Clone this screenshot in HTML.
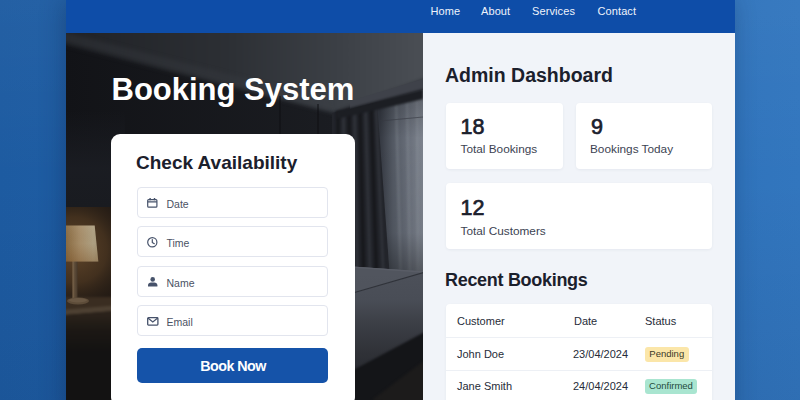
<!DOCTYPE html>
<html lang="en">
<head>
<meta charset="utf-8">
<title>Booking System</title>
<style>
*{box-sizing:border-box;margin:0;padding:0}
html,body{width:800px;height:400px;overflow:hidden}
body{font-family:"Liberation Sans",sans-serif;background:linear-gradient(180deg,rgba(255,255,255,.03) 0%,rgba(255,255,255,0) 45%,rgba(0,10,40,.07) 100%),linear-gradient(90deg,#1d5ba1 0%,#2262a9 40%,#2c6fb7 75%,#3276be 100%);position:relative;color:#1a1f2b}
.page{position:absolute;left:66px;top:0;width:669px;height:420px;overflow:hidden;background:#f1f4f9;box-shadow:-3px 0 22px rgba(8,30,70,.32)}
.in{position:absolute;left:-1px;top:0;width:670px;height:420px}
.nav{position:absolute;left:0;top:0;width:670px;height:33px;background:#0e4da8;z-index:2}
.nav a{position:absolute;top:3.5px;color:#eef3fb;font-size:11px;line-height:14px;text-decoration:none;letter-spacing:.1px}
.hero{position:absolute;left:0;top:32px;width:357.5px;height:388px;background:#191b20;overflow:hidden}
.hero svg{position:absolute;left:0;top:0}
.h1{position:absolute;left:46.5px;top:41px;color:#fff;font-weight:700;font-size:31px;line-height:34px;letter-spacing:0;white-space:nowrap}
.form{position:absolute;left:45.5px;top:134px;width:244px;height:272px;background:#fff;border-radius:9px}
.form h2{position:absolute;left:25.5px;top:17px;font-size:19px;line-height:24px;font-weight:700;color:#1b202c;white-space:nowrap}
.inp{position:absolute;left:26.5px;width:191px;height:31px;border:1px solid #e2e5ee;border-radius:4px;background:#fff}
.inp span{position:absolute;left:28.5px;top:8.5px;font-size:10.5px;line-height:14px;color:#4a5263}
.inp svg{position:absolute;left:9px;top:9px}
.btn{position:absolute;left:26px;top:213.5px;width:191px;height:35.5px;border-radius:5px;background:#1553a9;color:#fff;font-weight:700;font-size:14.3px;line-height:37.5px;letter-spacing:-.55px;text-indent:2px;text-align:center}
.side{position:absolute;left:358px;top:32px;width:312px;height:388px}
.side h2{position:absolute;left:22px;font-size:19.5px;line-height:24px;font-weight:700;color:#1b202c;white-space:nowrap}
.card{position:absolute;background:#fff;border-radius:4px;box-shadow:0 1px 3px rgba(30,50,90,.06)}
.card b{position:absolute;left:14.5px;top:12px;font-size:21.5px;line-height:24px;font-weight:400;-webkit-text-stroke:.7px #1b202c;color:#1b202c}
.card i{position:absolute;left:14.5px;top:39.5px;font-style:normal;font-size:11.8px;line-height:14px;color:#3c4352;white-space:nowrap}
.tbl{position:absolute;left:23px;top:272px;width:266px;height:130px;background:#fff;border-radius:4px;box-shadow:0 1px 3px rgba(30,50,90,.06)}
.tbl span{position:absolute;font-size:11px;line-height:14px;color:#262c38;white-space:nowrap}
.tbl hr{position:absolute;left:0;width:266px;height:1px;border:0;background:#edf0f5}
.bdg{position:absolute;left:199px;height:14.5px;border-radius:3px;font-size:9.5px;line-height:14.5px;text-align:center;color:#3b3a2a}
</style>
</head>
<body>
<div class="page"><div class="in">
  <div class="nav">
    <a style="left:365.5px">Home</a>
    <a style="left:416px">About</a>
    <a style="left:467px">Services</a>
    <a style="left:532.5px">Contact</a>
  </div>
  <div class="hero">
    <svg width="358" height="368" viewBox="65 32 358 368">
      <defs>
        <linearGradient id="gCeil" x1="65" y1="0" x2="423" y2="0" gradientUnits="userSpaceOnUse">
          <stop offset="0" stop-color="#202226"/><stop offset=".45" stop-color="#2c2f34"/><stop offset=".75" stop-color="#3b3f45"/><stop offset="1" stop-color="#4a4e54"/>
        </linearGradient>
        <linearGradient id="gWall" x1="65" y1="0" x2="350" y2="0" gradientUnits="userSpaceOnUse">
          <stop offset="0" stop-color="#121317"/><stop offset="1" stop-color="#1b1d22"/>
        </linearGradient>
        <linearGradient id="gSheer" x1="380" y1="0" x2="423" y2="0" gradientUnits="userSpaceOnUse">
          <stop offset="0" stop-color="#353942"/><stop offset=".3" stop-color="#535963"/><stop offset=".6" stop-color="#656b76"/><stop offset="1" stop-color="#7d838e"/>
        </linearGradient>
        <linearGradient id="gSheerV" x1="0" y1="100" x2="0" y2="290" gradientUnits="userSpaceOnUse">
          <stop offset="0" stop-color="#000" stop-opacity=".2"/><stop offset=".2" stop-color="#000" stop-opacity="0"/><stop offset=".7" stop-color="#000" stop-opacity=".05"/><stop offset="1" stop-color="#000" stop-opacity=".45"/>
        </linearGradient>
        <linearGradient id="gBed" x1="0" y1="266" x2="0" y2="380" gradientUnits="userSpaceOnUse">
          <stop offset="0" stop-color="#4d515a"/><stop offset=".3" stop-color="#494d56"/><stop offset=".5" stop-color="#3c3f46"/><stop offset=".75" stop-color="#303238"/><stop offset="1" stop-color="#26282d"/>
        </linearGradient>
        <radialGradient id="gGlow" cx="74" cy="250" r="66" gradientUnits="userSpaceOnUse">
          <stop offset="0" stop-color="#60452a"/><stop offset=".5" stop-color="#45321f" stop-opacity=".92"/><stop offset="1" stop-color="#221a14" stop-opacity="0"/>
        </radialGradient>
        <linearGradient id="gShade" x1="65" y1="0" x2="98" y2="0" gradientUnits="userSpaceOnUse">
          <stop offset="0" stop-color="#86683f"/><stop offset=".45" stop-color="#a58c68"/><stop offset=".85" stop-color="#ad9f81"/><stop offset="1" stop-color="#a6987b"/>
        </linearGradient>
        <linearGradient id="gShadeV" x1="0" y1="225" x2="0" y2="262" gradientUnits="userSpaceOnUse">
          <stop offset="0" stop-color="#fff" stop-opacity=".06"/><stop offset=".5" stop-color="#7a4a1a" stop-opacity="0"/><stop offset="1" stop-color="#6a3c10" stop-opacity=".3"/>
        </linearGradient>
        <linearGradient id="gLW" x1="0" y1="110" x2="0" y2="207" gradientUnits="userSpaceOnUse">
          <stop offset="0" stop-color="#1b1d23" stop-opacity="0"/><stop offset=".6" stop-color="#1b1d23" stop-opacity=".9"/><stop offset="1" stop-color="#191b20"/>
        </linearGradient>
        <linearGradient id="gNS" x1="0" y1="313" x2="0" y2="352" gradientUnits="userSpaceOnUse">
          <stop offset="0" stop-color="#2c231b"/><stop offset=".45" stop-color="#1c1814"/><stop offset="1" stop-color="#131212"/>
        </linearGradient>
        <linearGradient id="gStem" x1="72.5" y1="0" x2="77.5" y2="0" gradientUnits="userSpaceOnUse">
          <stop offset="0" stop-color="#806a4f"/><stop offset=".4" stop-color="#5f4d39"/><stop offset="1" stop-color="#47392b"/>
        </linearGradient>
        <filter id="b05" color-interpolation-filters="sRGB" x="-10%" y="-10%" width="120%" height="120%"><feGaussianBlur stdDeviation=".5"/></filter>
        <filter id="b2" color-interpolation-filters="sRGB" x="-20%" y="-20%" width="140%" height="140%"><feGaussianBlur stdDeviation="2"/></filter>
        <filter id="b1" color-interpolation-filters="sRGB" x="-20%" y="-20%" width="140%" height="140%"><feGaussianBlur stdDeviation=".8"/></filter>
        <filter id="b6" color-interpolation-filters="sRGB" x="-30%" y="-30%" width="160%" height="160%"><feGaussianBlur stdDeviation="6"/></filter>
      </defs>
      <rect x="65" y="32" width="358" height="368" fill="url(#gWall)"/>
      <!-- ceiling -->
      <polygon points="50,10 440,10 440,74 350,107 334,113 50,41" fill="url(#gCeil)" filter="url(#b2)"/>
      <path d="M50 33L330 105" stroke="#3a3d43" stroke-opacity=".32" stroke-width="9" filter="url(#b2)"/>
      <!-- wardrobe seams -->
      <path d="M280 96V140M318 104V140" stroke="#0e0f12" stroke-width="1"/>
      <!-- lamp-lit wall panel -->
      <rect x="65" y="110" width="60" height="97" fill="url(#gLW)"/>
      <rect x="65" y="207" width="60" height="110" fill="#221a14"/>
      <rect x="60" y="207" width="70" height="120" fill="url(#gGlow)"/>
      <!-- nightstand -->
      <g filter="url(#b1)">
      <rect x="60" y="297" width="60" height="14" fill="#3a2d21"/>
      <polygon points="60,310 120,305 120,310.5 60,315.5" fill="#4d4032"/>
      <polygon points="60,315.5 120,310.5 120,410 60,410" fill="url(#gNS)"/>
      </g>
      <!-- lamp -->
      <rect x="72.5" y="261" width="5" height="38" fill="url(#gStem)"/>
      <ellipse cx="78" cy="301" rx="11" ry="3.4" fill="#5d4c39" filter="url(#b05)"/>
      <ellipse cx="78" cy="300.3" rx="9" ry="2.2" fill="#6a5844" filter="url(#b05)"/>
      <g filter="url(#b05)"><polygon points="60,225.5 94.7,225.5 98.3,261.5 60,261.5" fill="url(#gShade)"/><polygon points="60,225.5 94.7,225.5 98.3,261.5 60,261.5" fill="url(#gShadeV)"/></g>
      <!-- curtains -->
      <polygon points="332,113 382,100 394,292 332,292" fill="#22242a"/>
      <g filter="url(#b1)">
      <path d="M338 112V290M349 110L351 290M360 107L364 290M371 104L377 290" stroke="#17181c" stroke-width="3.5" fill="none"/>
      <path d="M343.5 111L344.5 290M354.5 109L357.5 290M365.5 106L370.5 290M376 103L384 290" stroke="#30333a" stroke-width="2.5" fill="none"/>
      </g>
      <polygon points="377,101 423,89 423,292 391,292" fill="url(#gSheer)"/>
      <path d="M396 98L401 290M407 95L410 290M417 92L418 290" stroke="#9aa0aa" stroke-opacity=".28" stroke-width="2.5" filter="url(#b1)" fill="none"/>
      <path d="M380 121L423 117" stroke="#3c4049" stroke-opacity=".6" stroke-width="1.2" filter="url(#b05)"/>
      <polygon points="377,101 423,89 423,292 391,292" fill="url(#gSheerV)"/>
      <!-- cornice + pelmet -->
      <polygon points="350,101 423,79 423,90 350,109" fill="#3f424a"/>
      <polygon points="336,111 350,108 423,89 423,99 350,116 336,119" fill="#1c1e23" filter="url(#b1)"/>
      <!-- bed -->
      <polygon points="345,266 423,271.5 423,400 345,400" fill="url(#gBed)"/>
      <path d="M345 266.6L423 272" stroke="#5d616a" stroke-width="1.4" filter="url(#b05)"/>
      <polygon points="345,266 423,271.5 423,273 345,295.5" fill="#565a63" opacity=".55"/>
      <path d="M345 295.3L430 270.7" stroke="#30333a" stroke-width="1.1" filter="url(#b05)"/>
      <polygon points="345,374.5 430,329 430,410 345,410" fill="#141518" filter="url(#b1)"/>
      <polygon points="372,400 430,356 430,410" fill="#1c1b1b" filter="url(#b1)"/>
    </svg>
    <div class="h1">Booking System</div>
  </div>
  <div class="form">
    <h2>Check Availability</h2>
    <div class="inp" style="top:53px"><svg width="11" height="10" viewBox="0 0 11 10" style="left:8.5px;top:9.5px"><rect x=".7" y="1.7" width="9.2" height="7.5" rx=".9" fill="none" stroke="#46526a" stroke-width="1.2"/><path d="M.7 3.9h9.2M3.1 0v2.2M7.5 0v2.2" stroke="#46526a" stroke-width="1.4" fill="none"/></svg><span>Date</span></div>
    <div class="inp" style="top:92px"><svg width="11" height="11" viewBox="0 0 11 11" style="left:9px;top:9.8px"><circle cx="5.3" cy="5.3" r="4.6" fill="none" stroke="#46526a" stroke-width="1.2"/><path d="M5.3 2.6v2.9l2 1.2" stroke="#46526a" stroke-width="1.2" fill="none" stroke-linecap="round" stroke-linejoin="round"/></svg><span>Time</span></div>
    <div class="inp" style="top:132px"><svg width="10" height="10" viewBox="0 0 10 10" style="left:10px;top:9.8px"><circle cx="4.7" cy="2.4" r="2.3" fill="#46526a"/><path d="M0 9.5V8.2C0 6.5 1.5 5.6 3 5.6h3.4c1.5 0 3 .9 3 2.6v1.3z" fill="#46526a"/></svg><span>Name</span></div>
    <div class="inp" style="top:171px"><svg width="12" height="9" viewBox="0 0 12 9" style="left:8.6px;top:11.4px"><rect x=".7" y=".7" width="10.2" height="7.4" rx=".8" fill="none" stroke="#46526a" stroke-width="1.3"/><path d="M.9 1l4.9 4 4.9-4" stroke="#46526a" stroke-width="1.2" fill="none"/></svg><span>Email</span></div>
    <div class="btn">Book Now</div>
  </div>
  <div class="side">
    <h2 style="top:31px">Admin Dashboard</h2>
    <div class="card" style="left:23px;top:70.5px;width:117px;height:66px"><b>18</b><i>Total Bookings</i></div>
    <div class="card" style="left:152.5px;top:70.5px;width:136.5px;height:66px"><b style="left:15.5px">9</b><i>Bookings Today</i></div>
    <div class="card" style="left:23px;top:151px;width:266px;height:66px"><b style="top:13px">12</b><i style="top:40.5px">Total Customers</i></div>
    <h2 style="top:235.5px;font-size:18px;letter-spacing:-.3px">Recent Bookings</h2>
    <div class="tbl">
      <span style="left:11px;top:10px">Customer</span><span style="left:128px;top:10px">Date</span><span style="left:199px;top:10px">Status</span>
      <hr style="top:33px">
      <span style="left:11px;top:43px">John Doe</span><span style="left:127px;top:43px">23/04/2024</span>
      <div class="bdg" style="top:43px;width:43.5px;background:#fbe6a9">Pending</div>
      <hr style="top:66px">
      <span style="left:11px;top:75px">Jane Smith</span><span style="left:127px;top:75px">24/04/2024</span>
      <div class="bdg" style="top:75px;width:52px;background:#a9e5d0;color:#1f4a3d">Confirmed</div>
    </div>
  </div>
</div></div>
</body>
</html>
